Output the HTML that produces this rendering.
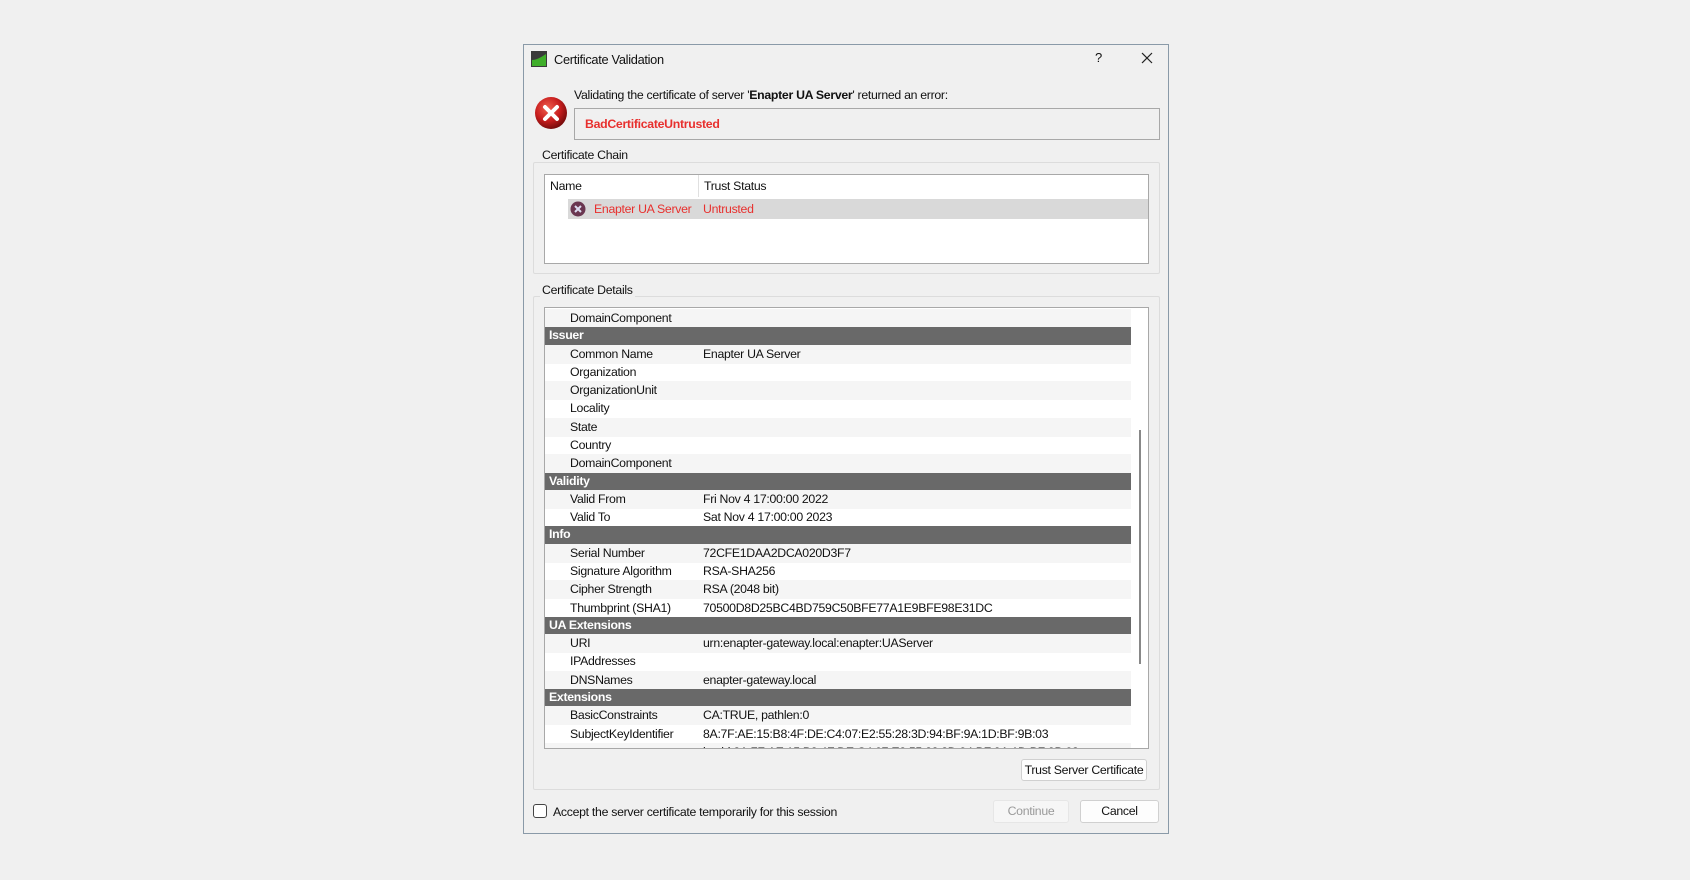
<!DOCTYPE html>
<html><head><meta charset="utf-8">
<style>
*{margin:0;padding:0;box-sizing:border-box}
body{width:1690px;height:880px;background:#f0f0f0;font-family:"Liberation Sans",sans-serif;font-size:12.3px;color:#111;letter-spacing:-0.3px;position:relative;overflow:hidden}
.a{position:absolute}
#dlg{left:523px;top:44px;width:646px;height:790px;border:1px solid #8a9aa8;background:#f0f0f0}
.grp{position:absolute;border:1px solid #dcdcdc;border-radius:2px}
.lbl{position:absolute;background:#f0f0f0;padding:0 2px}
.btn{position:absolute;background:#fdfdfd;border:1px solid #d0d0d0;border-radius:3px;text-align:center;line-height:20px}
.tbl{position:absolute;left:544px;top:307px;width:605px;height:442px;background:#fff;border:1px solid #a8a8a8;overflow:hidden}
.r{position:absolute;left:0;width:586px;height:18.5px;line-height:18.5px}
.r span{position:absolute}
.r .k{left:25px}.r .v{left:158px}
.g{background:#f5f5f5}
.h{background:#696969;color:#fff;font-weight:bold;height:17.5px;line-height:17.5px;padding-left:4px}
</style></head><body>
<div id="dlg" class="a"></div>
<svg class="a" style="left:531px;top:51px" width="16" height="16"><rect width="16" height="16" fill="#3a3a3a"/><path d="M1 15 L1 9 C5 9 9 7 15 3 L15 15 Z" fill="#3fae2a"/></svg>
<div class="a" style="left:554px;top:52px;font-size:12.8px">Certificate Validation</div>
<div class="a" style="left:1095px;top:50px;font-size:13px">?</div>
<svg class="a" style="left:1141px;top:52px" width="12" height="12"><path d="M1 1L11 11M11 1L1 11" stroke="#222" stroke-width="1.2"/></svg>
<svg class="a" style="left:534px;top:96px" width="34" height="34"><defs><radialGradient id="rg" cx="40%" cy="35%" r="65%"><stop offset="0" stop-color="#f06050"/><stop offset="0.6" stop-color="#c81e1e"/><stop offset="1" stop-color="#7a0c0c"/></radialGradient></defs><circle cx="17" cy="17" r="16" fill="url(#rg)"/><path d="M11 11L23 23M23 11L11 23" stroke="#fff" stroke-width="4" stroke-linecap="round"/></svg>
<div class="a" style="left:574px;top:88px">Validating the certificate of server '<b>Enapter UA Server</b>' returned an error:</div>
<div class="a" style="left:574px;top:108px;width:586px;height:32px;border:1px solid #a8a8a8;background:#f0f0f0"></div>
<div class="a" style="left:585px;top:117px;color:#e8302e;font-weight:bold">BadCertificateUntrusted</div>
<div class="grp" style="left:533px;top:162px;width:627px;height:112px"></div>
<div class="lbl" style="left:540px;top:148px">Certificate Chain</div>
<div class="a" style="left:544px;top:174px;width:605px;height:90px;background:#fff;border:1px solid #a8a8a8"></div>
<div class="a" style="left:698px;top:175px;width:1px;height:22px;background:#e0e0e0"></div>
<div class="a" style="left:550px;top:179px">Name</div>
<div class="a" style="left:704px;top:179px">Trust Status</div>
<div class="a" style="left:568px;top:199px;width:580px;height:20px;background:#d9d9d9"></div>
<svg class="a" style="left:570px;top:201px" width="16" height="16"><circle cx="8" cy="8" r="7.5" fill="#6a3650"/><path d="M5 5L11 11M11 5L5 11" stroke="#dcdcf0" stroke-width="2"/></svg>
<div class="a" style="left:594px;top:202px;color:#e8302e">Enapter UA Server</div>
<div class="a" style="left:703px;top:202px;color:#e8302e">Untrusted</div>
<div class="grp" style="left:533px;top:296px;width:627px;height:494px"></div>
<div class="lbl" style="left:540px;top:283px">Certificate Details</div>
<div class="tbl">
<div class="r g" style="top:1px"><span class="k">DomainComponent</span></div>
<div class="r h" style="top:19px">Issuer</div>
<div class="r g" style="top:37px"><span class="k">Common Name</span><span class="v">Enapter UA Server</span></div>
<div class="r" style="top:55px"><span class="k">Organization</span></div>
<div class="r g" style="top:73px"><span class="k">OrganizationUnit</span></div>
<div class="r" style="top:91px"><span class="k">Locality</span></div>
<div class="r g" style="top:110px"><span class="k">State</span></div>
<div class="r" style="top:128px"><span class="k">Country</span></div>
<div class="r g" style="top:146px"><span class="k">DomainComponent</span></div>
<div class="r h" style="top:165px">Validity</div>
<div class="r g" style="top:182px"><span class="k">Valid From</span><span class="v">Fri Nov 4 17:00:00 2022</span></div>
<div class="r" style="top:200px"><span class="k">Valid To</span><span class="v">Sat Nov 4 17:00:00 2023</span></div>
<div class="r h" style="top:218px">Info</div>
<div class="r g" style="top:236px"><span class="k">Serial Number</span><span class="v">72CFE1DAA2DCA020D3F7</span></div>
<div class="r" style="top:254px"><span class="k">Signature Algorithm</span><span class="v">RSA-SHA256</span></div>
<div class="r g" style="top:272px"><span class="k">Cipher Strength</span><span class="v">RSA (2048 bit)</span></div>
<div class="r" style="top:291px"><span class="k">Thumbprint (SHA1)</span><span class="v">70500D8D25BC4BD759C50BFE77A1E9BFE98E31DC</span></div>
<div class="r h" style="top:309px">UA Extensions</div>
<div class="r g" style="top:326px"><span class="k">URI</span><span class="v">urn:enapter-gateway.local:enapter:UAServer</span></div>
<div class="r" style="top:344px"><span class="k">IPAddresses</span></div>
<div class="r g" style="top:363px"><span class="k">DNSNames</span><span class="v">enapter-gateway.local</span></div>
<div class="r h" style="top:381px">Extensions</div>
<div class="r g" style="top:398px"><span class="k">BasicConstraints</span><span class="v">CA:TRUE, pathlen:0</span></div>
<div class="r" style="top:417px"><span class="k">SubjectKeyIdentifier</span><span class="v">8A:7F:AE:15:B8:4F:DE:C4:07:E2:55:28:3D:94:BF:9A:1D:BF:9B:03</span></div>
<div class="r g" style="top:435px"><span class="v">keyid:8A:7F:AE:15:B8:4F:DE:C4:07:E2:55:28:3D:94:BF:9A:1D:BF:9B:03</span></div>
<div class="a" style="left:594px;top:122px;width:2px;height:234px;background:#888"></div>
</div>
<div class="btn" style="left:1021px;top:759px;width:126px;height:22px">Trust Server Certificate</div>
<div class="a" style="left:533px;top:804px;width:14px;height:14px;border:1px solid #444;border-radius:3px;background:#fff"></div>
<div class="a" style="left:553px;top:805px">Accept the server certificate temporarily for this session</div>
<div class="btn" style="left:993px;top:800px;width:76px;height:23px;color:#9a9a9a;border-color:#e6e6e6;background:#f6f6f6">Continue</div>
<div class="btn" style="left:1080px;top:800px;width:79px;height:23px">Cancel</div>
</body></html>
